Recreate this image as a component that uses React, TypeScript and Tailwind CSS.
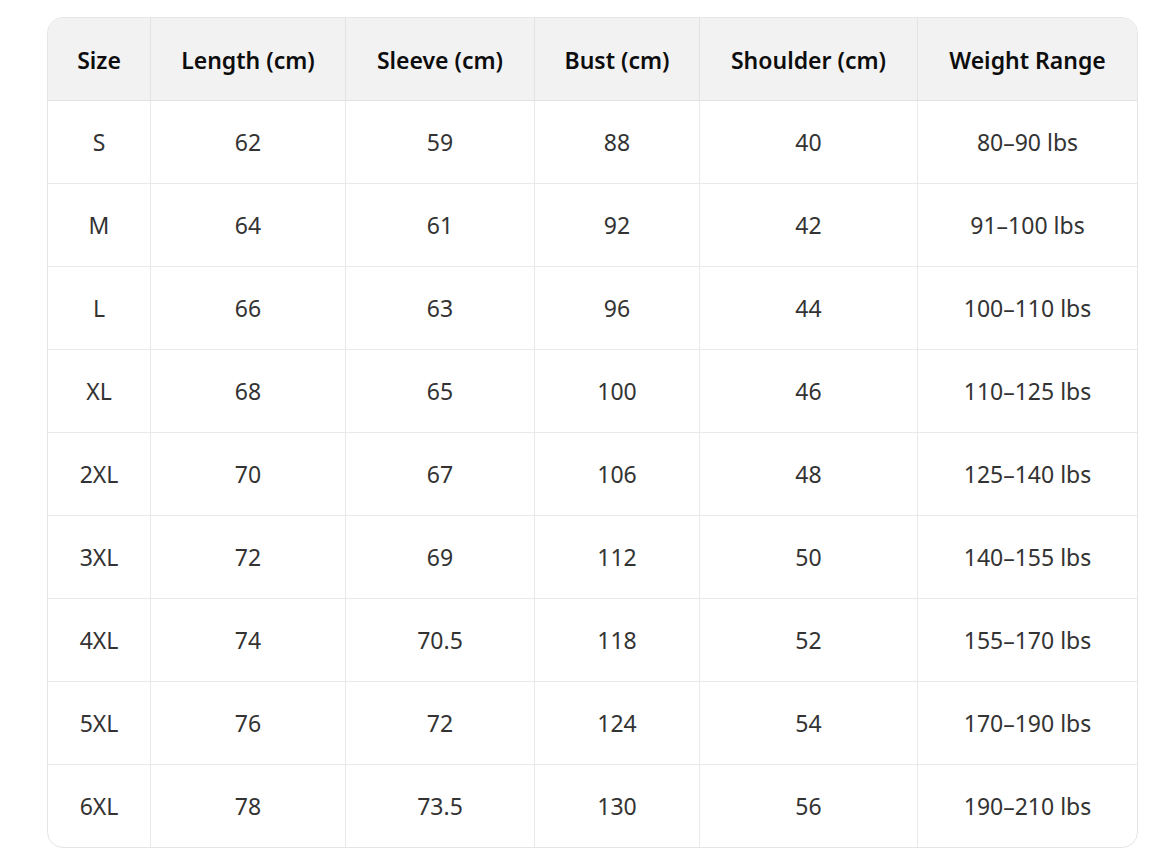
import React from "react";

const headers = ["Size", "Length (cm)", "Sleeve (cm)", "Bust (cm)", "Shoulder (cm)", "Weight Range"];
const rows: string[][] = [
  ["S", "62", "59", "88", "40", "80–90 lbs"],
  ["M", "64", "61", "92", "42", "91–100 lbs"],
  ["L", "66", "63", "96", "44", "100–110 lbs"],
  ["XL", "68", "65", "100", "46", "110–125 lbs"],
  ["2XL", "70", "67", "106", "48", "125–140 lbs"],
  ["3XL", "72", "69", "112", "50", "140–155 lbs"],
  ["4XL", "74", "70.5", "118", "52", "155–170 lbs"],
  ["5XL", "76", "72", "124", "54", "170–190 lbs"],
  ["6XL", "78", "73.5", "130", "56", "190–210 lbs"],
];

export default function App() {
  return (
    <div className="min-h-[865px] bg-white pl-[47px] pt-[17px]" style={{ fontFamily: '"Noto Sans", "Open Sans", sans-serif' }}>
      <div className="w-[1091px] overflow-hidden rounded-2xl border border-[#e5e5e5]">
        <div className="grid grid-cols-[103px_195px_189px_165px_218px_219px] bg-[#f2f2f2]">
          {headers.map((h, i) => (
            <div
              key={h}
              className={`flex h-[83px] items-center justify-center border-b border-[#e3e3e3] pt-[2px] text-[23px] font-semibold text-[#0d0d0d] ${i < 5 ? "border-r" : ""}`}
            >
              {h}
            </div>
          ))}
        </div>
        {rows.map((r, ri) => (
          <div key={ri} className="grid grid-cols-[103px_195px_189px_165px_218px_219px]">
            {r.map((c, i) => (
              <div
                key={i}
                className={`flex items-center justify-center border-[#e9e9e9] text-[23px] text-[#333333] ${i < 5 ? "border-r" : ""} ${ri < rows.length - 1 ? "h-[83px] border-b" : "h-[82px]"}`}
              >
                {c}
              </div>
            ))}
          </div>
        ))}
      </div>
    </div>
  );
}
